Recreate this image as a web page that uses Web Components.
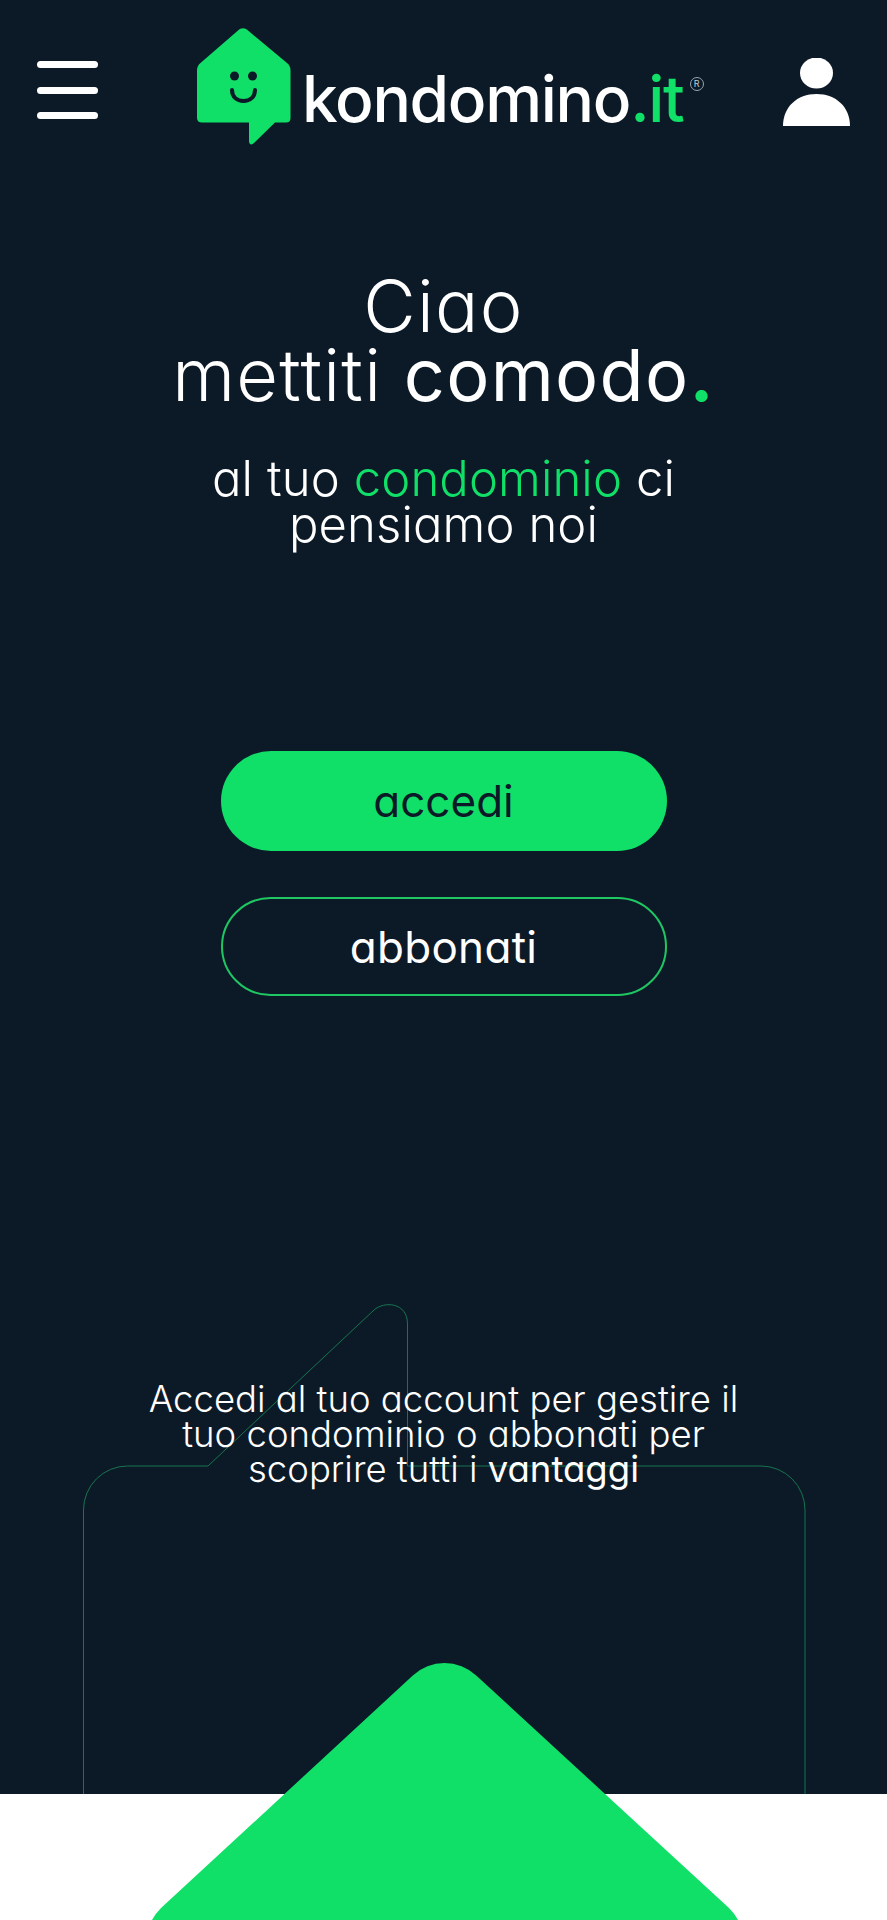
<!DOCTYPE html>
<html lang="it">
<head>
<meta charset="utf-8">
<title>kondomino.it</title>
<style>
  html, body { margin: 0; padding: 0; background: #0c1a28; }
  body { font-family: Inter, "Noto Sans", sans-serif; font-feature-settings: "cv11"; }
</style>
</head>
<body>
<kd-page>
  <kd-header></kd-header>
  <kd-hero></kd-hero>
  <kd-actions>
    <kd-button variant="solid">accedi</kd-button>
    <kd-button variant="outline">abbonati</kd-button>
  </kd-actions>
  <kd-intro></kd-intro>
</kd-page>
<script>
class KdPage extends HTMLElement {
    constructor() {
        super();
        this.attachShadow({mode: 'open'});
    }
    connectedCallback() {
        this.shadowRoot.innerHTML = `
          <style>
            :host { display: flex; flex-direction: column; position: relative; height: 1920px; width: 887px; overflow: hidden; background: #0c1a28; color: #fff; }
            .foot { position: absolute; left: 0; right: 0; bottom: 0; height: 126px; background: #fff; }
            svg.shape { position: absolute; left: 0; top: 0; }
            .flow { position: relative; display: flex; flex-direction: column; }
          </style>
          <div class="foot"></div>
          <svg class="shape" width="887" height="1920" viewBox="0 0 887 1920" fill="none">
            <path d="M83.5 1794V1510a44 44 0 0 1 44-44H208L374 1310c10-9 33.500-8 33.500 14V1466H761a44 44 0 0 1 44 44V1794" stroke="#17744f" stroke-width="1"/>
            <path d="M152 1920Q155 1914 161 1908L412.800 1675.500A46.600 46.600 0 0 1 476.200 1675.500L729 1908Q735 1914 738 1920Z" fill="#10e068"/>
          </svg>
          <div class="flow"><slot></slot></div>
        `;
    }
}

class KdHeader extends HTMLElement {
    constructor() {
        super();
        this.attachShadow({mode: 'open'});
    }
    connectedCallback() {
        this.shadowRoot.innerHTML = `
          <style>
            :host { display: flex; align-items: flex-start; box-sizing: border-box; height: 150px; padding: 27px 37px 0; }
            .burger { display: flex; flex-direction: column; gap: 18.500px; width: 61px; margin-top: 34px; }
            .burger i { display: block; height: 7px; border-radius: 4px; background: #fff; }
            .logo { display: flex; align-items: flex-start; margin-left: 99px; }
            .mark { display: block; }
            .word { font-size: 64px; line-height: 64px; font-weight: 500; letter-spacing: -1.300px; margin: 40px 0 0 11px; color: #fff; white-space: nowrap; }
            .word span { color: #10e068; }
            .reg { font-size: 9px; line-height: 12px; letter-spacing: 0; margin: 50px 0 0 6px; width: 12px; height: 12px; border: 1px solid #9aa3ad; border-radius: 50%; text-align: center; color: #c5cad0; box-sizing: content-box; }
            .user { margin: 31px 0 0 auto; display: block; }
          </style>
          <div class="burger"><i></i><i></i><i></i></div>
          <div class="logo">
            <svg class="mark" width="94" height="119" viewBox="197 27 94 119">
              <path d="M238 30.500c3-3 7-3 10 0L287 63c2.500 2 3.500 4.500 3.500 7.500V118c0 3-1.500 4.500-4.500 4.500H275L254 143c-2.500 2.500-5 1.500-5-2V122.500H202c-3 0-5-1.500-5-4.500V70.500c0-3 1-5.500 3.500-7.500Z" fill="#10e068"/>
              <circle cx="234.500" cy="76" r="4.500" fill="#0c1a28"/>
              <circle cx="252.500" cy="76" r="4.500" fill="#0c1a28"/>
              <path d="M232 90c0 7 5 11 11.500 11S255 97 255 90" stroke="#0c1a28" stroke-width="4" stroke-linecap="round" fill="none"/>
            </svg>
            <div class="word">kondomino<span>.it</span></div>
            <div class="reg">R</div>
          </div>
          <svg class="user" width="67" height="68" viewBox="783 58 67 68">
            <ellipse cx="816.500" cy="73" rx="16.500" ry="15.500" fill="#fff"/>
            <path d="M783 126c0-19 14-32 33.500-32S850 107 850 126Z" fill="#fff"/>
          </svg>
        `;
    }
}

class KdHero extends HTMLElement {
    constructor() {
        super();
        this.attachShadow({mode: 'open'});
    }
    connectedCallback() {
        this.shadowRoot.innerHTML = `
          <style>
            :host { display: block; text-align: center; padding-top: 121px; }
            h1 { margin: 0; font-size: 72px; line-height: 69px; font-weight: 300; letter-spacing: 1.300px; }
            h1 b { font-weight: 400; }
            h1 span { color: #10e068; font-weight: 700; }
            p { margin: 47px 0 0; font-size: 49px; line-height: 46px; font-weight: 300; letter-spacing: 0.100px; }
            p span { color: #10e068; }
          </style>
          <h1>Ciao<br>mettiti <b>comodo</b><span>.</span></h1>
          <p>al tuo <span>condominio</span> ci<br>pensiamo noi</p>
        `;
    }
}

class KdActions extends HTMLElement {
    constructor() {
        super();
        this.attachShadow({mode: 'open'});
    }
    connectedCallback() {
        this.shadowRoot.innerHTML = `
          <style>
            :host { display: flex; flex-direction: column; align-items: center; gap: 46px; padding-top: 203px; }
          </style>
          <slot></slot>
        `;
    }
}

class KdButton extends HTMLElement {
    constructor() {
        super();
        this.attachShadow({mode: 'open'});
    }
    connectedCallback() {
        const solid = this.getAttribute('variant') === 'solid';
        this.shadowRoot.innerHTML = `
          <style>
            :host { display: flex; align-items: center; justify-content: center; box-sizing: border-box; width: 446px; height: ${solid ? 100 : 99}px; border-radius: 50px; font-size: 44px; font-weight: 400; letter-spacing: ${solid ? 0 : 0.300}px; }
            :host([variant="solid"]) { background: #10e068; color: #0c1a28; }
            :host([variant="outline"]) { border: 2.500px solid #1fc763; color: #fff; }
          </style>
          <slot></slot>
        `;
    }
}

class KdIntro extends HTMLElement {
    constructor() {
        super();
        this.attachShadow({mode: 'open'});
    }
    connectedCallback() {
        this.shadowRoot.innerHTML = `
          <style>
            :host { display: block; text-align: center; padding-top: 386px; font-size: 36.500px; line-height: 35px; font-weight: 300; }
            b { font-weight: 400; }
          </style>
          Accedi al tuo account per gestire il<br>tuo condominio o abbonati per<br>scoprire tutti i <b>vantaggi</b>
        `;
    }
}

customElements.define('kd-page', KdPage);
customElements.define('kd-header', KdHeader);
customElements.define('kd-hero', KdHero);
customElements.define('kd-actions', KdActions);
customElements.define('kd-button', KdButton);
customElements.define('kd-intro', KdIntro);
</script>
</body>
</html>
